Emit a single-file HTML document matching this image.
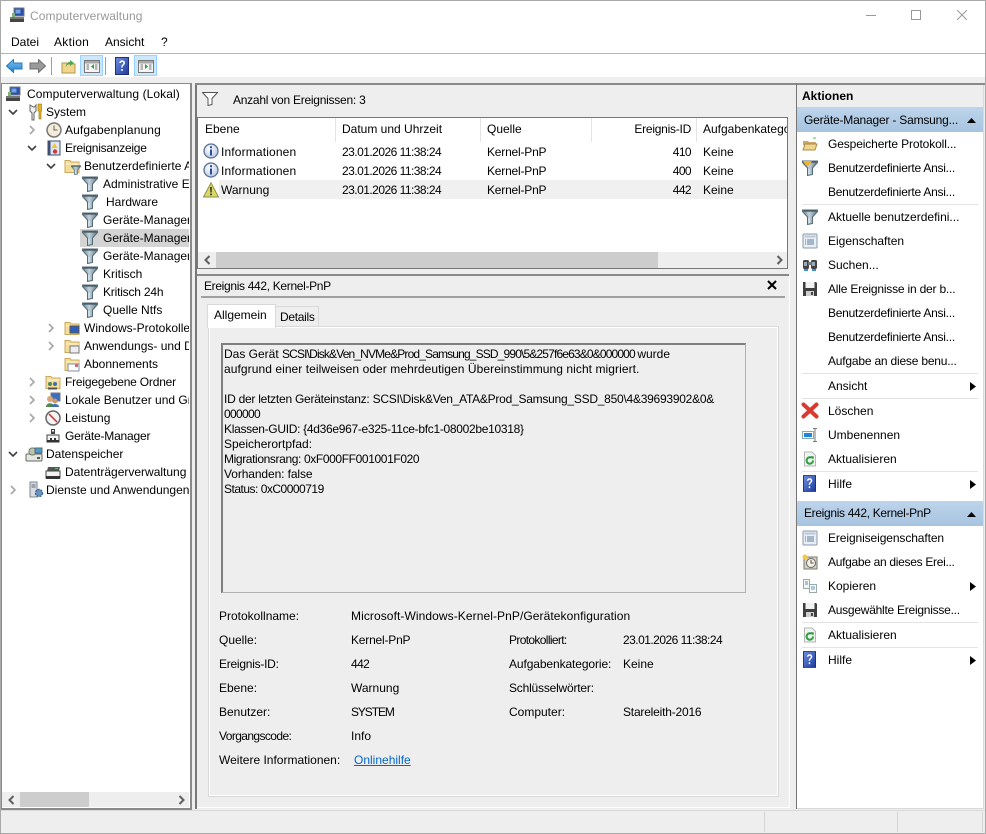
<!DOCTYPE html>
<html lang="de"><head><meta charset="utf-8"><title>Computerverwaltung</title>
<style>
html,body{margin:0;padding:0;background:#eee}
#w{position:relative;width:986px;height:834px;overflow:hidden;background:#eee;font:12px/16px "Liberation Sans",sans-serif;color:#000}
#w div,#w svg,#w a{position:absolute}
.t{white-space:nowrap;height:16px}
.box{box-sizing:border-box}
.clip{overflow:hidden}
.d{letter-spacing:-.53px}
.k{letter-spacing:-.2px}
.n{letter-spacing:-.6px}
.b{letter-spacing:-.25px}
.e{letter-spacing:-.33px}
</style></head><body>
<svg width="0" height="0" style="position:absolute">
<defs>
<linearGradient id="gf" x1="0" x2="1" y1="0" y2="0"><stop offset="0" stop-color="#6b8593"/><stop offset=".45" stop-color="#c0d2dc"/><stop offset="1" stop-color="#5f7886"/></linearGradient>
<linearGradient id="gb" x1="0" x2="0" y1="0" y2="1"><stop offset="0" stop-color="#7cc6f5"/><stop offset="1" stop-color="#1f7fce"/></linearGradient>
<linearGradient id="gh" x1="0" x2="1" y1="0" y2="1"><stop offset="0" stop-color="#6f8fe0"/><stop offset="1" stop-color="#1c3a9c"/></linearGradient>
<radialGradient id="gi" cx=".4" cy=".35" r=".7"><stop offset="0" stop-color="#fff"/><stop offset="1" stop-color="#b4c6e2"/></radialGradient>
<symbol id="funnel" viewBox="0 0 16 16"><path d="M.5 1h15v1.500L10.500 8v6.500l-5 1V8L.5 2.500z" fill="url(#gf)" stroke="#566a76"/><path d="M1.500 2h13" stroke="#3f525c" stroke-width="1.200"/><path d="M7 9v5" stroke="#e4edf2"/></symbol>
<symbol id="folder" viewBox="0 0 16 16"><path d="M1 2.500h5l1 1.500h8v10.500H1z" fill="#f5dc98" stroke="#c9a85f"/><path d="M2 6h13" stroke="#fff3cf"/></symbol>
<symbol id="chev" viewBox="0 0 10 10"><path d="M3 1l4 4-4 4" fill="none" stroke="#a6a6a6" stroke-width="1.600"/></symbol>
<symbol id="chevd" viewBox="0 0 10 10"><path d="M1 3l4 4 4-4" fill="none" stroke="#404040" stroke-width="1.600"/></symbol>
<symbol id="info" viewBox="0 0 16 16"><circle cx="8" cy="8" r="7" fill="url(#gi)" stroke="#5c6f94" stroke-width="1.300"/><path d="M7 3.300h2v2H7zM7 6.500h2v6H7z" fill="#2c4c9a"/></symbol>
<symbol id="warn" viewBox="0 0 16 16"><path d="M8 .8L15.500 15H.5z" fill="#d9d868" stroke="#8f8f45"/><path d="M7.200 5h1.600l-.2 5.500H7.400zM7.200 11.500h1.600v1.700H7.200z" fill="#222"/></symbol>
<symbol id="help" viewBox="0 0 14 18"><rect x=".5" y=".5" width="13" height="17" fill="url(#gh)" stroke="#1c2f7a"/><path d="M4.300 6c0-3.500 5.700-3.500 5.700 0 0 2-2.400 2.300-2.400 4.500H6.200c0-3 2.200-3 2.200-4.500 0-1.300-2.600-1.300-2.600 0zM6.200 12h1.500v2H6.200z" fill="#fff"/></symbol>
<symbol id="save" viewBox="0 0 16 16"><path d="M1 1h13l1 1v13H1z" fill="#3f3f3f"/><rect x="3.500" y="1" width="9" height="6" fill="#f2f2f2"/><rect x="4" y="10" width="8" height="5" fill="#cfcfcf"/><rect x="9" y="11" width="2" height="3" fill="#444"/></symbol>
<symbol id="props" viewBox="0 0 16 16"><rect x="1" y="1" width="14" height="14" rx="1" fill="#e9eef4" stroke="#8b9aab"/><rect x="2.500" y="2.500" width="11" height="2" fill="#b8c8da"/><path d="M5 7h7M5 9h7M5 11h7" stroke="#5f7f9f"/><path d="M3 7h1M3 9h1M3 11h1" stroke="#3d86c6"/></symbol>
<symbol id="refresh" viewBox="0 0 16 16"><path d="M2.500 1H10l3.500 3.500V15h-11z" fill="#f3f3f3" stroke="#b5b5b5"/><path d="M11 9.500a3.200 3.200 0 1 1-1.200-2.500" fill="none" stroke="#2f9e3f" stroke-width="2"/><path d="M8.500 5l3.500.5-.8 3.300z" fill="#2f9e3f"/></symbol>
<symbol id="toggle" viewBox="0 0 16 13"><rect x=".5" y=".5" width="15" height="12" fill="#f5f5f5" stroke="#777"/><rect x="1" y="1" width="14" height="2.500" fill="#a9a9a9"/><path d="M2.500 5h2.500M2.500 7h2.500M2.500 9h2.500M11 5h2.500M11 7h2.500M11 9h2.500" stroke="#777"/></symbol>
<symbol id="drive" viewBox="0 0 16 16"><path d="M6 1h4v5H6z" fill="#444"/><rect x="7" y="2" width="2" height="1.500" fill="#fff"/><path d="M2 7h12v7H2z" fill="#f3f3f3" stroke="#444"/><path d="M2 12h12v2.500H2z" fill="#333"/><rect x="5" y="10" width="2" height="3" fill="#333"/><rect x="9" y="10" width="2" height="3" fill="#333"/></symbol>
<symbol id="comp" viewBox="0 0 16 16"><rect x="5" y="1" width="10" height="8" fill="#2a4fa8" stroke="#777"/><rect x="6.500" y="2.500" width="5" height="4" fill="#6fa5e8"/><rect x="1" y="10" width="14" height="2" fill="#777"/><rect x="1" y="12" width="14" height="3" fill="#444"/><rect x="3" y="6" width="3" height="4" fill="#7bb37b"/></symbol>
</defs></svg>
<div id="w">

<!-- title bar + menu + toolbar -->
<div style="left:0;top:0;width:986px;height:77px;background:#fff"></div>
<div style="left:0;top:0;width:986px;height:1px;background:#a9a9a9"></div>
<div style="left:0;top:0;width:1px;height:834px;background:#a9a9a9"></div>
<div style="left:985px;top:0;width:1px;height:834px;background:#a9a9a9"></div>
<svg style="left:9px;top:7px" width="16" height="16"><use href="#comp"/></svg>
<div class="t" style="left:30px;top:8px;color:#999;letter-spacing:.1px">Computerverwaltung</div>
<div style="left:866px;top:15px;width:10px;height:1px;background:#999"></div>
<div class="box" style="left:911px;top:10px;width:10px;height:10px;border:1px solid #999"></div>
<svg style="left:957px;top:10px" width="10" height="10"><path d="M0 0l10 10M10 0L0 10" stroke="#999"/></svg>
<div class="t" style="left:11px;top:34px">Datei</div>
<div class="t" style="left:54px;top:34px;letter-spacing:.3px">Aktion</div>
<div class="t" style="left:105px;top:34px">Ansicht</div>
<div class="t" style="left:161px;top:34px">?</div>
<div style="left:1px;top:53px;width:984px;height:1px;background:#b4b4bc"></div>

<svg style="left:6px;top:59px" width="17" height="14"><path d="M.5 7L7.500.5v3.500H16v6H7.500v3.500z" fill="url(#gb)" stroke="#2a79b9"/></svg>
<svg style="left:29px;top:59px" width="17" height="14"><path d="M16.500 7L9.500.5v3.500H1v6h8.500v3.500z" fill="#9a9a9a" stroke="#6f6f6f"/></svg>
<div style="left:51px;top:57px;width:1px;height:18px;background:#9f9f9f"></div>
<svg style="left:61px;top:58px" width="15" height="16"><path d="M1 5h5l1 1h7v9H1z" fill="#f1d58a" stroke="#b3964f"/><path d="M5 9c0-4 2-5 4-5V2l4 3-4 3V6C7 6 6 7 5 9z" fill="#4ca84c"/></svg>
<div class="box" style="left:80px;top:55px;width:23px;height:21px;background:#cce8ff;border:1px solid #99d1ff"></div>
<svg style="left:84px;top:60px" width="16" height="13"><use href="#toggle"/><path d="M10 4v5L7 6.500z" fill="#2f9e3f"/></svg>
<div style="left:105px;top:57px;width:1px;height:18px;background:#9f9f9f"></div>
<svg style="left:115px;top:57px" width="14" height="18"><use href="#help"/></svg>
<div class="box" style="left:134px;top:55px;width:23px;height:21px;background:#cce8ff;border:1px solid #99d1ff"></div>
<svg style="left:138px;top:60px" width="16" height="13"><use href="#toggle"/><path d="M7 4v5l3-2.500z" fill="#2f9e3f"/></svg>

<!-- left pane -->
<div class="box" style="left:1px;top:83px;width:191px;height:727px;background:#fff;border:1px solid #8a8a8a;border-width:1px 2px 2px 1px"></div>
<div style="left:80px;top:229px;width:109px;height:18px;background:#d4d4d4"></div>
<div class="clip" style="left:2px;top:84px;width:187px;height:420px">
<svg style="left:3px;top:2px" width="16" height="16"><use href="#comp"/></svg>
<div class="t" style="left:25px;top:2px;letter-spacing:.08px">Computerverwaltung (Lokal)</div>
<svg style="left:6px;top:23px" width="10" height="10"><use href="#chevd"/></svg>
<svg style="left:26px;top:19px" width="14" height="18"><path d="M2 2v6l2 2v7h2v-7l2-2V2L6.500 4h-1z" fill="#eee" stroke="#666"/><path d="M10 1v7h1v8h2V8h1V1z" fill="#e6b422" stroke="#8a6d1a" stroke-width=".6"/></svg>
<div class="t" style="left:44px;top:20px">System</div>
<svg style="left:25px;top:41px" width="10" height="10"><use href="#chev"/></svg>
<svg style="left:44px;top:38px" width="16" height="16"><circle cx="8" cy="8" r="7" fill="#f4ecd8" stroke="#777" stroke-width="1.500"/><path d="M8 3.500V8h3.500" fill="none" stroke="#666"/></svg>
<div class="t" style="left:63px;top:38px;letter-spacing:.12px">Aufgabenplanung</div>
<svg style="left:25px;top:59px" width="10" height="10"><use href="#chevd"/></svg>
<svg style="left:44px;top:56px" width="16" height="16"><rect x="2" y="1" width="12" height="14" fill="#dfe7f3" stroke="#3e4e70"/><path d="M3.500 1v14" stroke="#3e4e70" stroke-width="2"/><path d="M8.500 3l3 5h-6z" fill="#f2c230"/><circle cx="9" cy="11.500" r="2.200" fill="#d23a3a"/></svg>
<div class="t" style="left:63px;top:56px;letter-spacing:-.25px">Ereignisanzeige</div>
<svg style="left:44px;top:77px" width="10" height="10"><use href="#chevd"/></svg>
<svg style="left:62px;top:74px" width="16" height="16"><use href="#folder"/></svg>
<svg style="left:69px;top:81px" width="10" height="10"><use href="#funnel"/></svg>
<div class="t" style="left:82px;top:74px">Benutzerdefinierte Ansichten</div>
<svg style="left:80px;top:92px" width="16" height="16"><use href="#funnel"/></svg>
<div class="t" style="left:101px;top:92px">Administrative Ereignisse</div>
<svg style="left:80px;top:110px" width="16" height="16"><use href="#funnel"/></svg>
<div class="t" style="left:104px;top:110px">Hardware</div>
<svg style="left:80px;top:128px" width="16" height="16"><use href="#funnel"/></svg>
<div class="t" style="left:101px;top:128px">Geräte-Manager</div>
<svg style="left:80px;top:146px" width="16" height="16"><use href="#funnel"/></svg>
<div class="t" style="left:101px;top:146px">Geräte-Manager</div>
<svg style="left:80px;top:164px" width="16" height="16"><use href="#funnel"/></svg>
<div class="t" style="left:101px;top:164px">Geräte-Manager</div>
<svg style="left:80px;top:182px" width="16" height="16"><use href="#funnel"/></svg>
<div class="t" style="left:101px;top:182px">Kritisch</div>
<svg style="left:80px;top:200px" width="16" height="16"><use href="#funnel"/></svg>
<div class="t" style="left:101px;top:200px;letter-spacing:-.2px">Kritisch 24h</div>
<svg style="left:80px;top:218px" width="16" height="16"><use href="#funnel"/></svg>
<div class="t" style="left:101px;top:218px">Quelle Ntfs</div>
<svg style="left:44px;top:239px" width="10" height="10"><use href="#chev"/></svg>
<svg style="left:62px;top:236px" width="16" height="16"><use href="#folder"/><rect x="6" y="6" width="9" height="7" fill="#2a5fc0" stroke="#555"/></svg>
<div class="t" style="left:82px;top:236px">Windows-Protokolle</div>
<svg style="left:44px;top:257px" width="10" height="10"><use href="#chev"/></svg>
<svg style="left:62px;top:254px" width="16" height="16"><use href="#folder"/><rect x="6" y="8" width="9" height="7" fill="#eee" stroke="#777"/></svg>
<div class="t" style="left:82px;top:254px">Anwendungs- und Dienstprotokolle</div>
<svg style="left:62px;top:272px" width="16" height="16"><use href="#folder"/><rect x="4" y="8" width="11" height="7" fill="#fff" stroke="#7f8fa8"/><rect x="11" y="8" width="3" height="3" fill="#d66"/></svg>
<div class="t" style="left:82px;top:272px">Abonnements</div>
<svg style="left:25px;top:293px" width="10" height="10"><use href="#chev"/></svg>
<svg style="left:43px;top:290px" width="16" height="16"><use href="#folder"/><circle cx="5" cy="10" r="2" fill="#4a8a5a"/><circle cx="10" cy="10" r="2" fill="#3f6fae"/><path d="M3 14.500h9" stroke="#555" stroke-width="2"/></svg>
<div class="t" style="left:63px;top:290px;letter-spacing:-.2px">Freigegebene Ordner</div>
<svg style="left:25px;top:311px" width="10" height="10"><use href="#chev"/></svg>
<svg style="left:43px;top:308px" width="16" height="16"><rect x="6" y="1" width="9" height="8" fill="#3d6fc0" stroke="#777"/><circle cx="5" cy="7" r="3" fill="#d8a878"/><path d="M1 15c0-5 8-5 8 0z" fill="#4f8a4f"/><circle cx="10" cy="9" r="2.500" fill="#c89a70"/><path d="M6 15c0-4 8-4 8 0z" fill="#3f6fae"/></svg>
<div class="t" style="left:63px;top:308px">Lokale Benutzer und Gruppen</div>
<svg style="left:25px;top:329px" width="10" height="10"><use href="#chev"/></svg>
<svg style="left:43px;top:326px" width="16" height="16"><circle cx="8" cy="8" r="7" fill="#f4f4f4" stroke="#666" stroke-width="1.500"/><path d="M4 4l8 8" stroke="#d02a2a" stroke-width="1.500"/></svg>
<div class="t" style="left:63px;top:326px">Leistung</div>
<svg style="left:43px;top:344px" width="16" height="16"><use href="#drive"/></svg>
<div class="t k" style="left:63px;top:344px">Geräte-Manager</div>
<svg style="left:6px;top:365px" width="10" height="10"><use href="#chevd"/></svg>
<svg style="left:23px;top:361px" width="18" height="18"><rect x="1" y="9" width="16" height="7" rx="1" fill="#e4e8df" stroke="#666"/><rect x="4" y="3" width="7" height="7" rx="3" fill="#b5c9a5" stroke="#777"/><rect x="10" y="3" width="7" height="5" fill="#3fa0d8" stroke="#666"/><rect x="12" y="12" width="3" height="2" fill="#555"/></svg>
<div class="t" style="left:44px;top:362px">Datenspeicher</div>
<svg style="left:43px;top:380px" width="16" height="16"><path d="M3 3h12l-1 4H2z" fill="#555"/><rect x="10" y="4" width="3" height="1" fill="#5c5"/><rect x="1" y="7" width="14" height="7" fill="#f2f2f2" stroke="#444"/><rect x="1" y="12" width="14" height="3" fill="#333"/></svg>
<div class="t" style="left:63px;top:380px">Datenträgerverwaltung</div>
<svg style="left:6px;top:401px" width="10" height="10"><use href="#chev"/></svg>
<svg style="left:26px;top:397px" width="16" height="18"><path d="M2 1h7v15H2z" fill="#d8dde2" stroke="#7b8790"/><path d="M3.500 4h4M3.500 6h4" stroke="#667"/><circle cx="11" cy="12" r="3.500" fill="#6c93c0" stroke="#3f6691" stroke-width="1.500" stroke-dasharray="2 1"/></svg>
<div class="t" style="left:44px;top:398px">Dienste und Anwendungen</div>
</div>
<div style="left:2px;top:792px;width:187px;height:15px;background:#eee"></div>
<div style="left:20px;top:792px;width:69px;height:15px;background:#cdcdcd"></div>
<svg style="left:8px;top:795px" width="7" height="10"><path d="M5.500 1L1.500 5l4 4" fill="none" stroke="#606060" stroke-width="2"/></svg>
<svg style="left:178px;top:795px" width="7" height="10"><path d="M1.500 1l4 4-4 4" fill="none" stroke="#606060" stroke-width="2"/></svg>

<!-- centre -->
<div style="left:195px;top:83px;width:2px;height:726px;background:#777"></div>
<div style="left:195px;top:83px;width:790px;height:2px;background:#8a8a8a"></div>
<svg style="left:202px;top:92px" width="16" height="14"><path d="M.5.5h15L10 6.500v6l-4 1v-7z" fill="#fff" stroke="#555"/></svg>
<div class="t b" style="left:233px;top:92px">Anzahl von Ereignissen: 3</div>
<div class="box" style="left:197px;top:117px;width:591px;height:152px;background:#fff;border:1px solid #777"></div>
<div style="left:335px;top:118px;width:1px;height:24px;background:#e3e3e3"></div>
<div style="left:480px;top:118px;width:1px;height:24px;background:#e3e3e3"></div>
<div style="left:591px;top:118px;width:1px;height:24px;background:#e3e3e3"></div>
<div style="left:696px;top:118px;width:1px;height:24px;background:#e3e3e3"></div>
<div style="left:219px;top:180px;width:568px;height:19px;background:#f0f0f0"></div>
<div class="clip" style="left:198px;top:118px;width:589px;height:90px">
<div class="t" style="left:7px;top:3px">Ebene</div>
<div class="t" style="left:144px;top:3px">Datum und Uhrzeit</div>
<div class="t" style="left:289px;top:3px">Quelle</div>
<div class="t b" style="left:393px;top:3px;width:100px;text-align:right">Ereignis-ID</div>
<div class="t" style="left:505px;top:3px">Aufgabenkategorie</div>
<svg style="left:5px;top:25px" width="16" height="16"><use href="#info"/></svg>
<div class="t" style="left:23px;top:26px;letter-spacing:.15px">Informationen</div>
<div class="t d" style="left:144px;top:26px">23.01.2026 11:38:24</div>
<div class="t k" style="left:289px;top:26px">Kernel-PnP</div>
<div class="t n" style="left:393px;top:26px;width:100px;text-align:right">410</div>
<div class="t" style="left:505px;top:26px">Keine</div>
<svg style="left:5px;top:44px" width="16" height="16"><use href="#info"/></svg>
<div class="t" style="left:23px;top:45px;letter-spacing:.15px">Informationen</div>
<div class="t d" style="left:144px;top:45px">23.01.2026 11:38:24</div>
<div class="t k" style="left:289px;top:45px">Kernel-PnP</div>
<div class="t n" style="left:393px;top:45px;width:100px;text-align:right">400</div>
<div class="t" style="left:505px;top:45px">Keine</div>
<svg style="left:5px;top:64px" width="16" height="16"><use href="#warn"/></svg>
<div class="t" style="left:23px;top:64px">Warnung</div>
<div class="t d" style="left:144px;top:64px">23.01.2026 11:38:24</div>
<div class="t k" style="left:289px;top:64px">Kernel-PnP</div>
<div class="t n" style="left:393px;top:64px;width:100px;text-align:right">442</div>
<div class="t" style="left:505px;top:64px">Keine</div>
</div>
<div style="left:198px;top:252px;width:589px;height:16px;background:#eee"></div>
<div style="left:216px;top:252px;width:442px;height:16px;background:#cdcdcd"></div>
<svg style="left:204px;top:255px" width="7" height="10"><path d="M5.500 1L1.500 5l4 4" fill="none" stroke="#606060" stroke-width="2"/></svg>
<svg style="left:776px;top:255px" width="7" height="10"><path d="M1.500 1l4 4-4 4" fill="none" stroke="#606060" stroke-width="2"/></svg>

<!-- detail pane -->
<div style="left:197px;top:274px;width:592px;height:2px;background:#8a8a8a"></div>
<div class="box" style="left:197px;top:276px;width:593px;height:532px;border-right:1px solid #fff;border-bottom:1px solid #fff"></div>
<div class="t e" style="left:204px;top:278px">Ereignis 442, Kernel-PnP</div>
<svg style="left:767px;top:280px" width="10" height="10"><path d="M1 1l8 8M9 1L1 9" stroke="#000" stroke-width="2"/></svg>
<div style="left:201px;top:296px;width:584px;height:2px;background:#a0a0a0"></div>
<div class="box" style="left:208px;top:326px;width:571px;height:471px;border:1px solid #d9d9d9;box-shadow:inset 0 0 0 1px #fff"></div>
<div class="box" style="left:275px;top:306px;width:44px;height:21px;background:#eee;border:1px solid #d9d9d9"></div>
<div class="t" style="left:280px;top:309px;letter-spacing:-.3px">Details</div>
<div class="box" style="left:207px;top:304px;width:69px;height:24px;background:#fff;border:1px solid #d9d9d9;border-bottom:0"></div>
<div class="t" style="left:214px;top:307px">Allgemein</div>
<div class="box" style="left:221px;top:343px;width:525px;height:250px;border:2px solid #7f7f7f;border-right:1px solid #b0b0b0;border-bottom:1px solid #b0b0b0"></div>
<div class="t" style="left:224px;top:346px">Das Gerät <span style="letter-spacing:-.85px">SCSI\Disk&amp;Ven_NVMe&amp;Prod_Samsung_SSD_990\5&amp;257f6e63&amp;0&amp;000000 </span>wurde</div>
<div class="t" style="left:224px;top:361px;letter-spacing:.07px">aufgrund einer teilweisen oder mehrdeutigen Übereinstimmung nicht migriert.</div>
<div class="t b" style="left:224px;top:391px">ID der letzten Geräteinstanz: SCSI\Disk&amp;Ven_ATA&amp;Prod_Samsung_SSD_850\4&amp;39693902&amp;0&amp;</div>
<div class="t" style="left:224px;top:406px;letter-spacing:-.67px">000000</div>
<div class="t" style="left:224px;top:421px;letter-spacing:-.3px">Klassen-GUID: {4d36e967-e325-11ce-bfc1-08002be10318}</div>
<div class="t" style="left:224px;top:436px">Speicherortpfad:</div>
<div class="t" style="left:224px;top:451px;letter-spacing:-.38px">Migrationsrang: 0xF000FF001001F020</div>
<div class="t" style="left:224px;top:466px;letter-spacing:-.1px">Vorhanden: false</div>
<div class="t" style="left:224px;top:481px;letter-spacing:-.5px">Status: 0xC0000719</div>

<div class="t" style="left:219px;top:608px">Protokollname:</div>
<div class="t" style="left:351px;top:608px;letter-spacing:.08px">Microsoft-Windows-Kernel-PnP/Gerätekonfiguration</div>
<div class="t" style="left:219px;top:632px">Quelle:</div>
<div class="t k" style="left:351px;top:632px">Kernel-PnP</div>
<div class="t" style="left:509px;top:632px;letter-spacing:-.65px">Protokolliert:</div>
<div class="t d" style="left:623px;top:632px">23.01.2026 11:38:24</div>
<div class="t b" style="left:219px;top:656px">Ereignis-ID:</div>
<div class="t n" style="left:351px;top:656px">442</div>
<div class="t" style="left:509px;top:656px;letter-spacing:-.1px">Aufgabenkategorie:</div>
<div class="t" style="left:623px;top:656px">Keine</div>
<div class="t" style="left:219px;top:680px">Ebene:</div>
<div class="t" style="left:351px;top:680px">Warnung</div>
<div class="t k" style="left:509px;top:680px">Schlüsselwörter:</div>
<div class="t" style="left:219px;top:704px">Benutzer:</div>
<div class="t" style="left:351px;top:704px;letter-spacing:-1.1px">SYSTEM</div>
<div class="t" style="left:509px;top:704px">Computer:</div>
<div class="t k" style="left:623px;top:704px">Stareleith-2016</div>
<div class="t" style="left:219px;top:728px;letter-spacing:-.6px">Vorgangscode:</div>
<div class="t" style="left:351px;top:728px">Info</div>
<div class="t" style="left:219px;top:752px">Weitere Informationen:</div>
<div class="t" style="left:354px;top:752px;color:#0066cc;text-decoration:underline">Onlinehilfe</div>

<!-- right pane -->
<div style="left:796px;top:83px;width:1px;height:726px;background:#777"></div>
<div style="left:797px;top:107px;width:186px;height:701px;background:#fff"></div>
<div style="left:797px;top:808px;width:187px;height:1px;background:#d9d9d9"></div>
<div style="left:983px;top:85px;width:1px;height:724px;background:#d9d9d9"></div>
<div class="t" style="left:802px;top:88px;font-weight:bold">Aktionen</div>
<div style="left:797px;top:107px;width:186px;height:25px;background:linear-gradient(#bdd5ec,#a7c3df)"></div>
<div class="t k" style="left:804px;top:112px">Geräte-Manager - Samsung...</div>
<svg style="left:967px;top:118px" width="9" height="5"><path d="M4.500 0L9 5H0z" fill="#000"/></svg>

<svg style="left:802px;top:136px" width="16" height="16"><path d="M1 5h5l1 1h7v3H1z" fill="#c9a868"/><path d="M3 8h12l-2 6H1z" fill="#f0d58f" stroke="#ab8c4a"/><path d="M11 2h3" stroke="#3cc83c"/></svg>
<div class="t" style="left:828px;top:136px;letter-spacing:-.12px">Gespeicherte Protokoll...</div>
<svg style="left:802px;top:160px" width="16" height="16"><use href="#funnel"/><path d="M1 1h9L7 5H4z" fill="#f0b428"/></svg>
<div class="t b" style="left:828px;top:160px">Benutzerdefinierte Ansi...</div>
<div class="t b" style="left:828px;top:184px">Benutzerdefinierte Ansi...</div>
<div style="left:802px;top:204px;width:176px;height:1px;background:#e3e3e3"></div>
<svg style="left:802px;top:209px" width="16" height="16"><use href="#funnel"/></svg>
<div class="t" style="left:828px;top:209px">Aktuelle benutzerdefini...</div>
<svg style="left:802px;top:233px" width="16" height="16"><use href="#props"/></svg>
<div class="t" style="left:828px;top:233px">Eigenschaften</div>
<svg style="left:802px;top:257px" width="16" height="16"><rect x="1" y="3" width="6" height="9" rx="1.500" fill="#444"/><rect x="9" y="3" width="6" height="9" rx="1.500" fill="#444"/><rect x="6" y="5" width="4" height="3" fill="#777"/><rect x="2" y="5" width="3" height="4" fill="#9ab"/><rect x="10" y="5" width="3" height="4" fill="#9ab"/><path d="M2 13h4M10 13h4" stroke="#3d8fd6" stroke-width="2"/></svg>
<div class="t" style="left:828px;top:257px">Suchen...</div>
<svg style="left:802px;top:281px" width="16" height="16"><use href="#save"/></svg>
<div class="t k" style="left:828px;top:281px">Alle Ereignisse in der b...</div>
<div class="t b" style="left:828px;top:305px">Benutzerdefinierte Ansi...</div>
<div class="t b" style="left:828px;top:329px">Benutzerdefinierte Ansi...</div>
<div class="t k" style="left:828px;top:353px">Aufgabe an diese benu...</div>
<div style="left:802px;top:373px;width:176px;height:1px;background:#e3e3e3"></div>
<div class="t" style="left:828px;top:378px">Ansicht</div>
<svg style="left:970px;top:382px" width="6" height="9"><path d="M0 0l6 4.500-6 4.500z" fill="#000"/></svg>
<div style="left:802px;top:398px;width:176px;height:1px;background:#e3e3e3"></div>
<svg style="left:801px;top:402px" width="18" height="17"><path d="M2.500 2.500l13 12M15.500 2.500l-13 12" stroke="#d93a30" stroke-width="4" stroke-linecap="round"/></svg>
<div class="t" style="left:828px;top:403px">Löschen</div>
<svg style="left:802px;top:427px" width="16" height="16"><rect x=".5" y="4.500" width="11" height="7" fill="#fff" stroke="#8aa"/><rect x="2" y="6" width="8" height="4" fill="#1f86e0"/><path d="M11 1.500h4M11 14.500h4M13 1.500v13" stroke="#777"/></svg>
<div class="t" style="left:828px;top:427px">Umbenennen</div>
<svg style="left:802px;top:451px" width="16" height="16"><use href="#refresh"/></svg>
<div class="t" style="left:828px;top:451px">Aktualisieren</div>
<div style="left:802px;top:471px;width:176px;height:1px;background:#e3e3e3"></div>
<svg style="left:803px;top:475px" width="13" height="17"><use href="#help"/></svg>
<div class="t" style="left:828px;top:476px">Hilfe</div>
<svg style="left:970px;top:480px" width="6" height="9"><path d="M0 0l6 4.500-6 4.500z" fill="#000"/></svg>

<div style="left:797px;top:501px;width:186px;height:25px;background:linear-gradient(#bdd5ec,#a7c3df)"></div>
<div class="t e" style="left:804px;top:505px">Ereignis 442, Kernel-PnP</div>
<svg style="left:967px;top:512px" width="9" height="5"><path d="M4.500 0L9 5H0z" fill="#000"/></svg>
<svg style="left:802px;top:530px" width="16" height="16"><use href="#props"/></svg>
<div class="t" style="left:828px;top:530px;letter-spacing:-.1px">Ereigniseigenschaften</div>
<svg style="left:802px;top:554px" width="16" height="16"><rect x="2" y="3" width="13" height="12" fill="#d9d2c4" stroke="#777"/><circle cx="9" cy="9" r="4.500" fill="#f5f0e2" stroke="#666"/><path d="M9 6v3h2.500" fill="none" stroke="#555"/><circle cx="3" cy="3" r="2.500" fill="#f5c842"/></svg>
<div class="t" style="left:828px;top:554px;letter-spacing:-.3px">Aufgabe an dieses Erei...</div>
<svg style="left:802px;top:578px" width="16" height="16"><path d="M1.500 1.500h6v9h-6z" fill="#f4f4f4" stroke="#9aa"/><path d="M7.500 6.500h7v8h-7z" fill="#fff" stroke="#9aa"/><path d="M3 4h3M3 6h3M9 9h4M9 11h4" stroke="#5b8fc0"/></svg>
<div class="t" style="left:828px;top:578px">Kopieren</div>
<svg style="left:970px;top:582px" width="6" height="9"><path d="M0 0l6 4.500-6 4.500z" fill="#000"/></svg>
<svg style="left:802px;top:602px" width="16" height="16"><use href="#save"/></svg>
<div class="t b" style="left:828px;top:602px">Ausgewählte Ereignisse...</div>
<div style="left:802px;top:622px;width:176px;height:1px;background:#e3e3e3"></div>
<svg style="left:802px;top:627px" width="16" height="16"><use href="#refresh"/></svg>
<div class="t" style="left:828px;top:627px">Aktualisieren</div>
<div style="left:802px;top:647px;width:176px;height:1px;background:#e3e3e3"></div>
<svg style="left:803px;top:651px" width="13" height="17"><use href="#help"/></svg>
<div class="t" style="left:828px;top:652px">Hilfe</div>
<svg style="left:970px;top:656px" width="6" height="9"><path d="M0 0l6 4.500-6 4.500z" fill="#000"/></svg>

<!-- status bar -->
<div style="left:1px;top:810px;width:984px;height:1px;background:#d9d9d9"></div>
<div style="left:764px;top:812px;width:1px;height:20px;background:#d4d4d4"></div>
<div style="left:897px;top:812px;width:1px;height:20px;background:#d4d4d4"></div>
<div style="left:982px;top:812px;width:1px;height:20px;background:#d4d4d4"></div>
<div style="left:0;top:833px;width:986px;height:1px;background:#a9a9a9"></div>
</div>
</body></html>
